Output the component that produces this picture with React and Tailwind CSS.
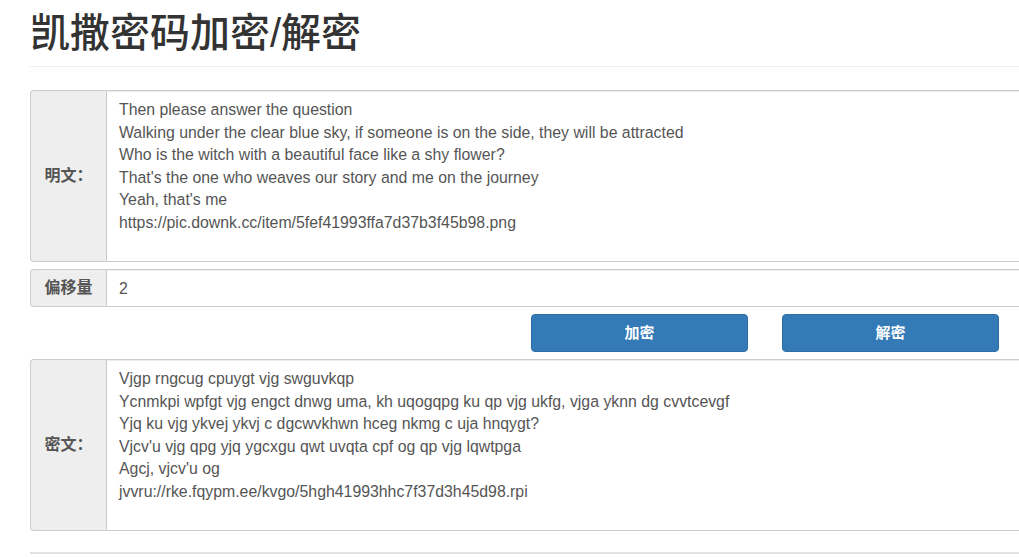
import React, { useState } from 'react';

const font = "font-['Liberation_Sans','Noto_Sans_CJK_SC',sans-serif]";

function shift(text, n) {
  return text.replace(/[a-z]/gi, (c) => {
    const base = c <= 'Z' ? 65 : 97;
    return String.fromCharCode(((c.charCodeAt(0) - base + n) % 26 + 26) % 26 + base);
  });
}

const plainDefault = `Then please answer the question
Walking under the clear blue sky, if someone is on the side, they will be attracted
Who is the witch with a beautiful face like a shy flower?
That's the one who weaves our story and me on the journey
Yeah, that's me
https://pic.downk.cc/item/5fef41993ffa7d37b3f45b98.png`;

function Label({ children }) {
  return (
    <div className="w-[76px] shrink-0 flex items-center justify-center bg-[#eeeeee] border border-r-0 border-[#cccccc] rounded-l-[4px] text-[16px] font-bold text-[#555555]">
      {children}
    </div>
  );
}

export default function App() {
  const [plain, setPlain] = useState(plainDefault);
  const [offset, setOffset] = useState('2');
  const [cipher, setCipher] = useState(shift(plainDefault, 2));

  const n = parseInt(offset, 10) || 0;

  return (
    <div className={`w-screen min-h-screen overflow-hidden bg-white ${font} text-[#333333]`}>
      <div className="ml-[30px] w-[1110px]">
        <div className="pt-[11px] pb-[11px] border-b border-[#eeeeee]">
          <h1 className="text-[40px] leading-[44px] font-medium text-[#333333]">凯撒密码加密/解密</h1>
        </div>

        <div className="mt-[23px] flex flex-col gap-[7px]">
          <div className="flex h-[172px]">
            <Label>明文：</Label>
            <textarea
              value={plain}
              onChange={(e) => setPlain(e.target.value)}
              className="flex-1 resize-none border border-[#cccccc] rounded-r-[4px] shadow-[inset_0_1px_1px_rgba(0,0,0,0.075)] px-[12px] pt-[8px] pb-[6px] text-[15.85px] leading-[22.5px] text-[#555555] outline-none"
            />
          </div>

          <div className="flex h-[38px]">
            <Label>偏移量</Label>
            <input
              value={offset}
              onChange={(e) => setOffset(e.target.value)}
              className="flex-1 border border-[#cccccc] rounded-r-[4px] shadow-[inset_0_1px_1px_rgba(0,0,0,0.075)] px-[12px] pt-[2px] text-[15.85px] text-[#555555] outline-none"
            />
          </div>

          <div className="flex h-[38px] pl-[501px] gap-[34px]">
            <button
              onClick={() => setCipher(shift(plain, n))}
              className="w-[217px] rounded-[4px] bg-[#337ab7] border border-[#2e6da4] text-white text-[15px] font-bold"
            >
              加密
            </button>
            <button
              onClick={() => setPlain(shift(cipher, -n))}
              className="w-[217px] rounded-[4px] bg-[#337ab7] border border-[#2e6da4] text-white text-[15px] font-bold"
            >
              解密
            </button>
          </div>

          <div className="flex h-[172px]">
            <Label>密文：</Label>
            <textarea
              value={cipher}
              onChange={(e) => setCipher(e.target.value)}
              className="flex-1 resize-none border border-[#cccccc] rounded-r-[4px] shadow-[inset_0_1px_1px_rgba(0,0,0,0.075)] px-[12px] pt-[8px] pb-[6px] text-[15.85px] leading-[22.5px] text-[#555555] outline-none"
            />
          </div>
        </div>

        <div className="mt-[21px] h-[2px] bg-[#e2e2e2]" />
      </div>
    </div>
  );
}
